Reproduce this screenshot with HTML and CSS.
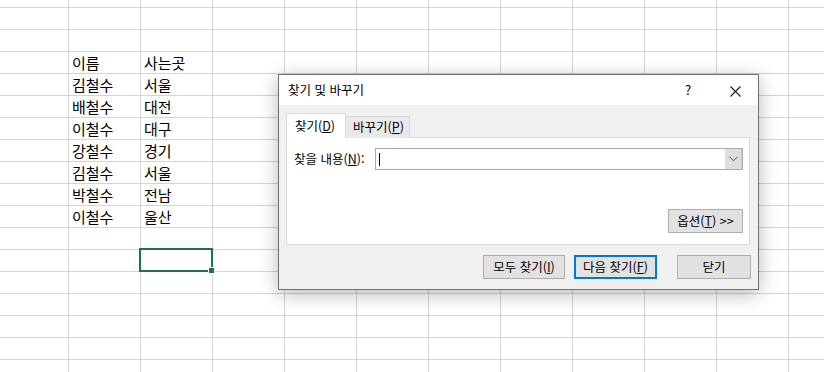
FILE: index.html
```html
<!DOCTYPE html>
<html lang="ko">
<head>
<meta charset="utf-8">
<title>찾기 및 바꾸기</title>
<link rel="stylesheet" href="styles.css">
</head>
<body>
<div class="sheet">
  <div class="data">
    <div class="cell">이름</div><div class="cell">사는곳</div>
    <div class="cell">김철수</div><div class="cell">서울</div>
    <div class="cell">배철수</div><div class="cell">대전</div>
    <div class="cell">이철수</div><div class="cell">대구</div>
    <div class="cell">강철수</div><div class="cell">경기</div>
    <div class="cell">김철수</div><div class="cell">서울</div>
    <div class="cell">박철수</div><div class="cell">전남</div>
    <div class="cell">이철수</div><div class="cell">울산</div>
    <div class="cell active"><span class="sel"><span class="handle"></span></span></div>
  </div>

  <div class="dialog">
    <div class="titlebar">
      <span class="title">찾기 및 바꾸기</span>
      <span class="help">?</span>
      <span class="close">
        <svg width="11" height="11" viewBox="0 0 11 11"><path d="M0.5 0.5 L10.5 10.5 M10.5 0.5 L0.5 10.5" stroke="#1a1a1a" stroke-width="1.1" fill="none"/></svg>
      </span>
    </div>
    <div class="body">
      <div class="tabs">
        <div class="tab selected">찾기(<u>D</u>)</div>
        <div class="tab">바꾸기(<u>P</u>)</div>
      </div>
      <div class="panel">
        <div class="findrow">
          <label class="label">찾을 내용(<u>N</u>):</label>
          <div class="combo">
            <span class="caret"></span>
            <span class="drop">
              <svg width="9" height="6" viewBox="0 0 9 6"><path d="M0.5 0.8 L4.5 4.8 L8.5 0.8" stroke="#555" stroke-width="1" fill="none"/></svg>
            </span>
          </div>
        </div>
        <div class="optrow">
          <button class="btn opt">옵션(<u>T</u>) &gt;&gt;</button>
        </div>
      </div>
      <div class="actions">
        <button class="btn b1">모두 찾기(<u>I</u>)</button>
        <button class="btn b2 default">다음 찾기(<u>F</u>)</button>
        <button class="btn b3">닫기</button>
      </div>
    </div>
  </div>
</div>
</body>
</html>
```
FILE: styles.css
```css
html, body {
  margin: 0;
  padding: 0;
  background: #fff;
}
body {
  font-family: "Noto Sans CJK KR", "Noto Sans", sans-serif;
  color: #000;
}
.sheet {
  position: relative;
  width: 824px;
  height: 372px;
  overflow: hidden;
  background-color: #fff;
  background-image:
    linear-gradient(to right, #d4d4d4 1px, transparent 1px),
    linear-gradient(to bottom, #d4d4d4 1px, transparent 1px);
  background-size: 72px 100%, 100% 22px;
  background-position: 68px 0, 0 7px;
}
.data {
  display: grid;
  grid-template-columns: 72px 72px;
  grid-auto-rows: 22px;
  padding: 52px 0 0 69px;
  width: 144px;
}
.cell {
  font-size: 15px;
  line-height: 22px;
  padding-left: 3px;
  white-space: nowrap;
}
.cell.active {
  grid-column: 2;
  grid-row: 10;
  position: relative;
}
.sel {
  position: absolute;
  left: -2px;
  top: -2px;
  width: 74px;
  height: 24px;
  box-sizing: border-box;
  border: 2px solid #217346;
}
.handle {
  position: absolute;
  right: -4px;
  bottom: -4px;
  width: 5px;
  height: 5px;
  background: #217346;
  border: 1px solid #fff;
}

/* dialog */
.dialog {
  position: absolute;
  left: 278px;
  top: 74px;
  width: 481px;
  height: 216px;
  box-sizing: border-box;
  border: 1px solid #707070;
  background: #f0f0f0;
  box-shadow: 0 4px 18px rgba(0, 0, 0, 0.28);
  display: flex;
  flex-direction: column;
  font-size: 12.5px;
}
.titlebar {
  height: 30px;
  background: #fff;
  display: flex;
  align-items: center;
  padding-left: 9px;
}
.title {
  flex: 1;
  font-size: 12.5px;
  line-height: 16px;
}
.help {
  font-size: 13px;
  width: 14px;
  text-align: center;
  margin-right: 35px;
  line-height: 16px;
}
.close {
  display: flex;
  margin-right: 17px;
  margin-top: 2px;
}
.body {
  flex: 1;
  display: flex;
  flex-direction: column;
  padding: 8px 8px 0 7px;
}
.tabs {
  display: flex;
  align-items: flex-end;
  height: 25px;
  margin-bottom: -1px;
  position: relative;
  z-index: 1;
}
.tab {
  box-sizing: border-box;
  height: 22px;
  border: 1px solid #d9d9d9;
  border-bottom: none;
  background: #e9e9e9;
  padding: 0 7px;
  line-height: 20px;
  width: 65px;
  margin-left: -1px;
  white-space: nowrap;
}
.tab.selected {
  height: 25px;
  width: 60px;
  margin-left: 0;
  background: #fff;
  line-height: 24px;
  padding-left: 8px;
  position: relative;
  z-index: 2;
}
.panel {
  box-sizing: border-box;
  height: 108px;
  background: #fff;
  border: 1px solid #d9d9d9;
  padding: 10px 6px 11px 7px;
  display: flex;
  flex-direction: column;
  justify-content: space-between;
}
.findrow {
  display: flex;
  align-items: center;
  height: 22px;
}
.label {
  width: 81px;
  line-height: 16px;
  white-space: nowrap;
}
.combo {
  flex: 1;
  height: 22px;
  box-sizing: border-box;
  border: 1px solid #a9a9a9;
  background: #fff;
  display: flex;
  align-items: center;
  justify-content: space-between;
}
.caret {
  width: 1px;
  height: 13px;
  background: #000;
  margin-left: 3px;
}
.drop {
  width: 17px;
  height: 20px;
  box-sizing: border-box;
  background: #dedede;
  border-right: 1px solid #c8c8c8;
  display: flex;
  align-items: center;
  justify-content: center;
}
.optrow {
  display: flex;
  justify-content: flex-end;
}
.btn {
  box-sizing: border-box;
  font-family: "Noto Sans CJK KR", "Noto Sans", sans-serif;
  font-size: 12.5px;
  color: #000;
  background: #e1e1e1;
  border: 1px solid #adadad;
  height: 24px;
  padding: 0;
  line-height: 20px;
  margin: 0;
  white-space: nowrap;
}
.opt {
  width: 75px;
}
.actions {
  display: flex;
  justify-content: flex-end;
  margin-top: 10px;
  margin-right: -1px;
}
.b1 {
  width: 82px;
}
.b2 {
  width: 83px;
  margin-left: 9px;
}
.b3 {
  width: 74px;
  margin-left: 20px;
}
.default {
  border: 2px solid #0078d7;
}
u {
  text-decoration: underline;
  text-underline-offset: 1px;
}
```
